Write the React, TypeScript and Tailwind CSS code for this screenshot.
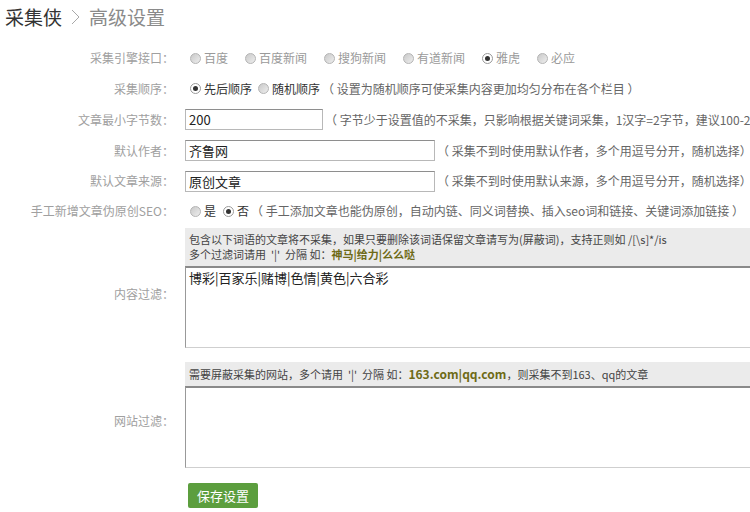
import type { ReactNode } from 'react';

function Radio({ checked = false, label, dim = false }: { checked?: boolean; label: string; dim?: boolean }) {
  return (
    <span className="inline-flex items-center">
      {checked ? (
        <span className="w-[11px] h-[11px] rounded-full border border-[#9a9a9a] bg-white flex items-center justify-center">
          <span className="w-[5px] h-[5px] rounded-full bg-[#333]" />
        </span>
      ) : (
        <span className="w-[11px] h-[11px] rounded-full border border-[#b4b4b4] bg-gradient-to-br from-[#c9c9c9] to-[#eeeeee]" />
      )}
      <span className={`ml-[3px] ${dim ? 'text-[#9a9a9a]' : 'text-[#333]'}`}>{label}</span>
    </span>
  );
}

function Row({ label, h, children }: { label: string; h: string; children: ReactNode }) {
  return (
    <div className={`flex items-center ${h}`}>
      <div className="w-[174px] shrink-0 text-right text-[#a0a0a0]">{label}</div>
      <div className="pl-[11px] flex items-center whitespace-nowrap">{children}</div>
    </div>
  );
}

function Hint({ children }: { children: ReactNode }) {
  return <span className="ml-[2px] text-[#666]">{children}</span>;
}

const inputCls =
  'h-[21px] px-[3px] border border-[#b8b8b8] border-t-[#8e8e8e] text-[13px] text-[#222] outline-none';

export default function App() {
  const engines = ['百度', '百度新闻', '搜狗新闻', '有道新闻', '雅虎', '必应'];

  return (
    <div className="w-[750px] h-[512px] overflow-hidden bg-white text-[12px] leading-[16px] [text-spacing-trim:space-all] font-['Noto_Sans_CJK_SC',sans-serif]">
      <div className="h-[43px] pl-[5px] pt-[4px] flex items-start text-[19px] leading-[26px]">
        <span className="text-[#333]">采集侠</span>
        <svg width="18" height="26" viewBox="0 0 18 26" className="ml-[4px] mr-[5px]">
          <polyline points="6,6 13,13 6,20" fill="none" stroke="#a8a8a8" strokeWidth="1" />
        </svg>
        <span className="text-[#8a8a8a]">高级设置</span>
      </div>

      <Row label="采集引擎接口：" h="h-[30px]">
        <div className="ml-[5px] flex items-center gap-[17px]">
          {engines.map((e) => (
            <Radio key={e} label={e} dim checked={e === '雅虎'} />
          ))}
        </div>
      </Row>

      <Row label="采集顺序：" h="h-[31px]">
        <div className="ml-[5px] flex items-center gap-[6px]">
          <Radio checked label="先后顺序" />
          <Radio label="随机顺序" />
        </div>
        <Hint>（ 设置为随机顺序可使采集内容更加均匀分布在各个栏目 ）</Hint>
      </Row>

      <Row label="文章最小字节数：" h="h-[31px]">
        <input readOnly defaultValue="200" className={`w-[138px] ${inputCls}`} />
        <Hint>（ 字节少于设置值的不采集，只影响根据关键词采集，1汉字=2字节，建议100-200 ）</Hint>
      </Row>

      <Row label="默认作者：" h="h-[31px]">
        <input readOnly defaultValue="齐鲁网" className={`w-[250px] ${inputCls}`} />
        <Hint>（ 采集不到时使用默认作者，多个用逗号分开，随机选择）</Hint>
      </Row>

      <Row label="默认文章来源：" h="h-[30px]">
        <input readOnly defaultValue="原创文章" className={`w-[250px] ${inputCls}`} />
        <Hint>（ 采集不到时使用默认来源，多个用逗号分开，随机选择）</Hint>
      </Row>

      <Row label="手工新增文章伪原创SEO：" h="h-[30px]">
        <div className="ml-[5px] flex items-center gap-[7px]">
          <Radio label="是" />
          <Radio checked label="否" />
        </div>
        <Hint>（ 手工添加文章也能伪原创，自动内链、同义词替换、插入seo词和链接、关键词添加链接 ）</Hint>
      </Row>

      <div className="flex items-center mt-[2px]">
        <div className="w-[174px] shrink-0 text-right text-[#a0a0a0] pt-[11px]">内容过滤：</div>
        <div className="pl-[11px] w-[576px] shrink-0">
          <div className="bg-[#ebebeb] px-[4px] py-[4px] text-[11px] leading-[15px] text-[#444] whitespace-nowrap">
            <div>包含以下词语的文章将不采集，如果只要删除该词语保留文章请写为(屏蔽词)，支持正则如 /[\s]*/is</div>
            <div>
              多个过滤词请用 &nbsp;'|' &nbsp;分隔 如：<b className="text-[#6e6a16]">神马|给力|么么哒</b>
            </div>
          </div>
          <textarea
            readOnly
            defaultValue="博彩|百家乐|赌博|色情|黄色|六合彩"
            className="block w-full h-[82px] resize-none px-[3px] pt-[1px] border-t-2 border-t-[#8a8a8a] border-l border-l-[#999] border-b border-b-[#cfcfcf] text-[13px] leading-[18px] text-[#222] outline-none"
          />
        </div>
      </div>

      <div className="flex items-center mt-[14px]">
        <div className="w-[174px] shrink-0 text-right text-[#a0a0a0] pt-[11px]">网站过滤：</div>
        <div className="pl-[11px] w-[576px] shrink-0">
          <div className="bg-[#ebebeb] px-[4px] py-[4px] text-[11px] leading-[15px] text-[#444] whitespace-nowrap">
            需要屏蔽采集的网站，多个请用 &nbsp;'|' &nbsp;分隔 如：<b className="text-[#6e6a16] text-[12px]">163.com|qq.com</b>，则采集不到163、qq的文章
          </div>
          <textarea
            readOnly
            className="block w-full h-[82px] resize-none px-[3px] border-t-2 border-t-[#8a8a8a] border-l border-l-[#999] border-b border-b-[#cfcfcf] text-[13px] outline-none"
          />
        </div>
      </div>

      <div className="pl-[188px] mt-[15px]">
        <button className="w-[70px] h-[25px] rounded-[2px] bg-[#5c9e3e] text-white text-[13px]">保存设置</button>
      </div>
    </div>
  );
}
